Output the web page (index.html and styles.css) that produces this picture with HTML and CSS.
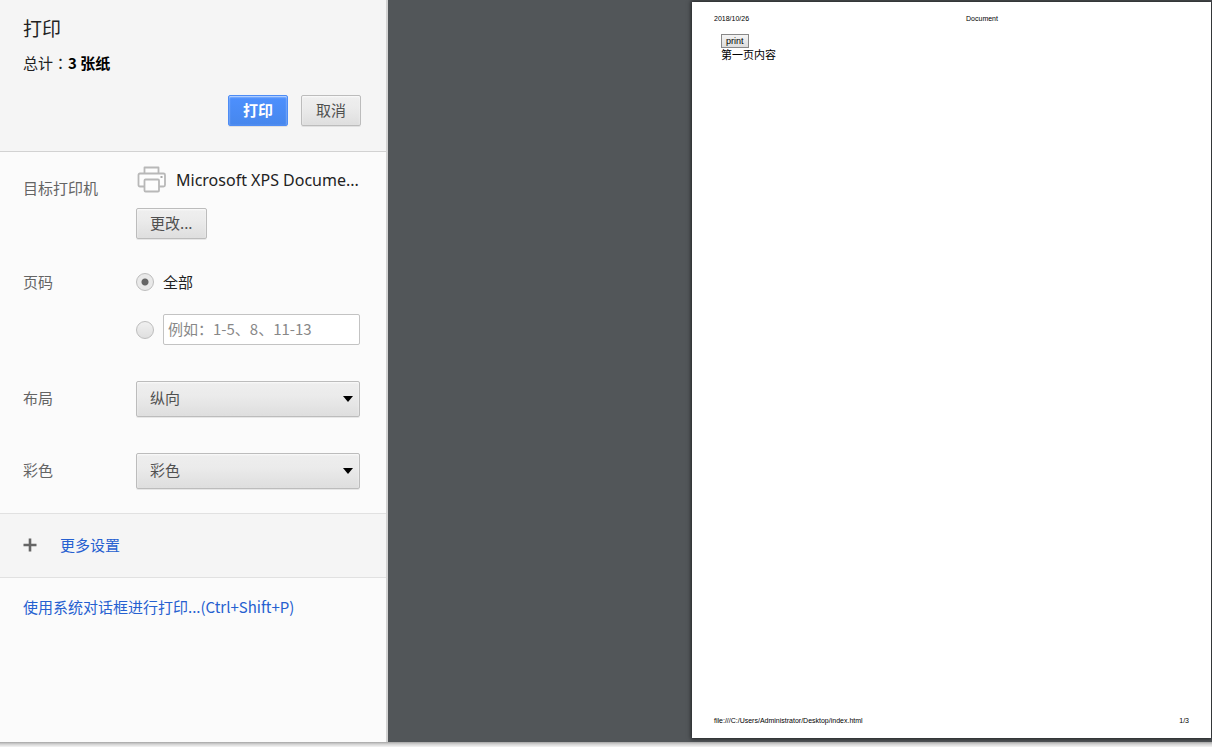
FILE: index.html
```html
<!DOCTYPE html>
<html lang="zh-CN">
<head>
<meta charset="utf-8">
<title>打印</title>
<link rel="stylesheet" href="styles.css">
</head>
<body>
<div class="dialog">
  <form class="sidebar">
    <header class="summary">
      <h1 class="title">打印</h1>
      <p class="total">总计<span class="colon" lang="zh-TW">：</span><b>3 张纸</b></p>
      <div class="actions">
        <button class="btn primary" type="button">打印</button>
        <button class="btn" type="button">取消</button>
      </div>
    </header>

    <div class="settings">
      <section class="row destination">
        <h2 class="label">目标打印机</h2>
        <div class="control">
          <div class="printer">
            <svg class="printer-icon" viewBox="0 0 30 28" aria-hidden="true">
              <g fill="#fdfdfd" stroke="#b8b8b8" stroke-width="1.8" stroke-linejoin="round">
                <path d="M8.500 8V1.500h14V8"/>
                <path d="M8.500 20.500H4Q2.500 20.500 2.500 19V9Q2.500 7.500 4 7.500H27.500Q29 7.500 29 9V19Q29 20.500 27.500 20.500H23"/>
                <path d="M8.500 14.500Q8.500 13.500 9.500 13.500H22Q23 13.500 23 14.500V24.500Q23 25.500 22 25.500H9.500Q8.500 25.500 8.500 24.500Z"/>
              </g>
              <rect x="24.500" y="10" width="2" height="2" fill="#aaa"/>
            </svg>
            <span class="printer-name">Microsoft XPS Docume...</span>
          </div>
          <button class="btn change" type="button">更改...</button>
        </div>
      </section>

      <section class="row pages">
        <h2 class="label">页码</h2>
        <div class="control">
          <div class="choice">
            <input class="radio" type="radio" name="pages" id="all" checked>
            <label for="all">全部</label>
          </div>
          <div class="choice">
            <input class="radio" type="radio" name="pages" id="range" aria-label="自定义页码">
            <input class="range" type="text" placeholder="例如：1-5、8、11-13" aria-label="页码范围">
          </div>
        </div>
      </section>

      <div class="row">
        <label class="label" for="layout">布局</label>
        <div class="control select-box">
          <select class="select" id="layout"><option>纵向</option><option>横向</option></select>
        </div>
      </div>

      <div class="row">
        <label class="label" for="color">彩色</label>
        <div class="control select-box">
          <select class="select" id="color"><option>彩色</option><option>黑白</option></select>
        </div>
      </div>
    </div>

    <div class="more">
      <svg class="plus" viewBox="0 0 14 14" aria-hidden="true"><path d="M7 0.500v13M0.500 7h13" stroke="#666" stroke-width="2.600"/></svg>
      <a class="link" href="#more">更多设置</a>
    </div>
    <div class="system"><a class="link" href="#system">使用系统对话框进行打印...(Ctrl+Shift+P)</a></div>
  </form>

  <main class="preview">
    <article class="sheet">
      <header class="sheet-head"><span>2018/10/26</span><span class="doc-title">Document</span><span></span></header>
      <div class="sheet-body">
        <button class="page-button" type="button">print</button>
        <p class="page-text">第一页内容</p>
      </div>
      <footer class="sheet-foot"><span>file:///C:/Users/Administrator/Desktop/index.html</span><span>1/3</span></footer>
    </article>
  </main>
</div>
<div class="edge"></div>
</body>
</html>
```
FILE: styles.css
```css
* { box-sizing: border-box; }

body {
  display: flex;
  flex-direction: column;
  height: 100vh;
  margin: 0;
  background: #fff;
  color: #222;
  font: 15px/20px "Noto Sans CJK SC", sans-serif;
}

h1, h2, p { margin: 0; font-weight: 400; }

button, input, select { font: inherit; }

.dialog { display: flex; flex: 1; min-height: 0; }

.edge {
  height: 5px;
  background: linear-gradient(#a5a5a5, #d0d0d0 40%, #f4f4f4);
}

.sidebar {
  flex: 0 0 388px;
  background: #fbfbfb;
  border-right: 2px solid #d2d2d2;
}

.summary {
  padding: 16px 25px 25px 23px;
  background: #f5f5f5;
  border-bottom: 1px solid #d2d2d2;
}

.title { font-size: 19px; line-height: 24px; }
.total { margin-top: 13px; }
.total b { color: #000; }
.colon { font-family: "Noto Sans CJK TC", sans-serif; }

.actions {
  display: flex;
  justify-content: flex-end;
  gap: 13px;
  margin-top: 22px;
}

.btn {
  min-width: 60px;
  height: 31px;
  padding: 0 13px 2px;
  border: 1px solid #bcbcbc;
  border-radius: 2px;
  background: linear-gradient(#efefef, #ebebeb 40%, #dedede);
  box-shadow: 0 1px 0 rgba(0, 0, 0, 0.08), inset 0 1px 2px rgba(255, 255, 255, 0.75);
  color: #505050;
}

.primary {
  border-color: #4d8cf5;
  background: linear-gradient(#4d90fe, #4787ed);
  color: #fff;
  font-weight: 700;
}

.settings {
  display: flex;
  flex-direction: column;
  padding: 13px 26px 24px 23px;
}

.row { display: grid; grid-template-columns: 113px 1fr; align-items: center; }
.row + .row { margin-top: 36px; }
.label { padding-bottom: 2px; color: #646464; font-size: 15px; }

.destination { align-items: start; }
.destination .label { padding-top: 13px; }
.printer { display: flex; align-items: center; gap: 10px; height: 30px; }
.printer-icon { width: 30px; height: 28px; }
.printer-name { font-family: "Noto Sans", sans-serif; font-size: 16px; white-space: nowrap; }
.change { margin-top: 13px; }

.row.pages { align-items: start; margin-top: 33px; }
.choice { display: flex; align-items: center; gap: 9px; }
.choice + .choice { margin-top: 22px; }

.radio {
  appearance: none;
  flex: none;
  width: 18px;
  height: 18px;
  margin: 0;
  border: 1px solid #bdbdbd;
  border-radius: 50%;
  background: linear-gradient(#f0f0f0, #dfdfdf);
}
.radio:checked { background: radial-gradient(circle, #666 3px, #e9e9e9 4px); }

.range {
  flex: 1;
  min-width: 0;
  height: 31px;
  padding: 0 4px 2px;
  border: 1px solid #c3c3c3;
  border-radius: 2px;
  background: #fff;
}
.range::placeholder { color: #888; }

.select-box { position: relative; }
.select-box::after {
  content: "";
  position: absolute;
  top: 15px;
  right: 7px;
  border: 5px solid transparent;
  border-top: 6px solid #000;
  border-bottom: 0;
  pointer-events: none;
}

.select {
  appearance: none;
  display: block;
  width: 100%;
  height: 36px;
  padding: 0 13px 2px;
  border: 1px solid #bcbcbc;
  border-radius: 2px;
  background: linear-gradient(#eee, #ebebeb 40%, #dedede);
  box-shadow: 0 1px 0 rgba(0, 0, 0, 0.08), inset 0 1px 2px rgba(255, 255, 255, 0.75);
  color: #505050;
}

.more {
  display: flex;
  align-items: center;
  gap: 23px;
  height: 65px;
  padding: 0 23px 2px;
  border: solid #e1e1e1;
  border-width: 1px 0;
  background: #f5f5f5;
}
.plus { width: 14px; height: 14px; }
.link { color: #2560d0; text-decoration: none; }
.system { padding: 19px 23px; white-space: nowrap; }

.preview {
  display: flex;
  flex: 1;
  justify-content: flex-end;
  min-width: 0;
  padding: 2px 1px 4px;
  background: #525659;
}

.sheet {
  display: flex;
  flex-direction: column;
  aspect-ratio: 519 / 736;
  height: 100%;
  padding: 12px 22px;
  background: #fff;
  box-shadow: 0 0 4px 1px rgba(0, 0, 0, 0.6);
  color: #000;
  font-family: "Liberation Sans", "Noto Sans CJK SC", sans-serif;
}

.sheet-head, .sheet-foot { font-size: 7px; line-height: 10px; }
.sheet-head { display: grid; grid-template-columns: 1fr auto 1fr; }
.doc-title { padding-left: 61px; }
.sheet-body { flex: 1; padding: 10px 7px; }
.page-button {
  display: block;
  height: 14px;
  padding: 0 4px;
  border: 1px solid #888;
  border-radius: 0;
  background: linear-gradient(#f4f4f4, #ddd);
  color: #000;
  font-size: 9px;
  line-height: 12px;
}
.page-text { font-size: 11px; line-height: 15px; }
.sheet-foot { display: flex; justify-content: space-between; }
```
